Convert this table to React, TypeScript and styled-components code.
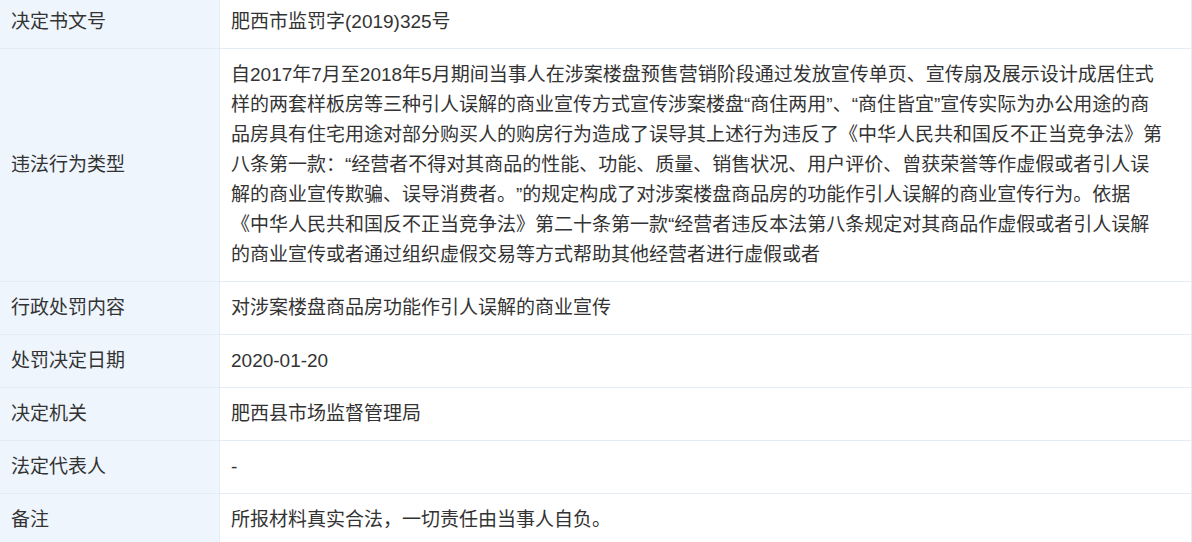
import * as React from 'react';
import styled, { createGlobalStyle } from 'styled-components';

const Colors = {
  text: '#333333',
  labelBg: '#eef5fd',
  border: '#e4ecf5',
  white: '#ffffff',
};

const rows: { label: string; value: string }[] = [
  { label: '决定书文号', value: '肥西市监罚字(2019)325号' },
  {
    label: '违法行为类型',
    value:
      '自2017年7月至2018年5月期间当事人在涉案楼盘预售营销阶段通过发放宣传单页、宣传扇及展示设计成居住式样的两套样板房等三种引人误解的商业宣传方式宣传涉案楼盘“商住两用”、“商住皆宜”宣传实际为办公用途的商品房具有住宅用途对部分购买人的购房行为造成了误导其上述行为违反了《中华人民共和国反不正当竞争法》第八条第一款：“经营者不得对其商品的性能、功能、质量、销售状况、用户评价、曾获荣誉等作虚假或者引人误解的商业宣传欺骗、误导消费者。”的规定构成了对涉案楼盘商品房的功能作引人误解的商业宣传行为。依据《中华人民共和国反不正当竞争法》第二十条第一款“经营者违反本法第八条规定对其商品作虚假或者引人误解的商业宣传或者通过组织虚假交易等方式帮助其他经营者进行虚假或者',
  },
  { label: '行政处罚内容', value: '对涉案楼盘商品房功能作引人误解的商业宣传' },
  { label: '处罚决定日期', value: '2020-01-20' },
  { label: '决定机关', value: '肥西县市场监督管理局' },
  { label: '法定代表人', value: '-' },
  { label: '备注', value: '所报材料真实合法，一切责任由当事人自负。' },
];

const App = () => {
  return (
    <>
      <GlobalStyle />
      <Table>
        {rows.map((r) => (
          <Row key={r.label}>
            <Label>{r.label}</Label>
            <Value>{r.value}</Value>
          </Row>
        ))}
      </Table>
    </>
  );
};

const GlobalStyle = createGlobalStyle`
  html, body {
    margin: 0;
    padding: 0;
    background: ${Colors.white};
    overflow: hidden;
  }
  body {
    font-family: "Liberation Sans", "Noto Sans CJK SC", sans-serif;
    color: ${Colors.text};
    text-spacing-trim: space-all;
  }
`;

const Table = styled.div`
  width: 1192px;
  box-sizing: border-box;
  border-right: 1px solid ${Colors.border};
  margin-top: -4px;
`;

const Row = styled.div`
  display: grid;
  grid-template-columns: 220px 1fr;
  border-bottom: 1px solid ${Colors.border};
`;

const Label = styled.div`
  background: ${Colors.labelBg};
  border-right: 1px solid ${Colors.border};
  padding: 11px 11px;
  font-size: 19px;
  line-height: 30px;
  display: flex;
  align-items: center;
`;

const Value = styled.div`
  padding: 11px 26px 11px 11px;
  font-size: 19px;
  line-height: 30px;
`;

export default App;
